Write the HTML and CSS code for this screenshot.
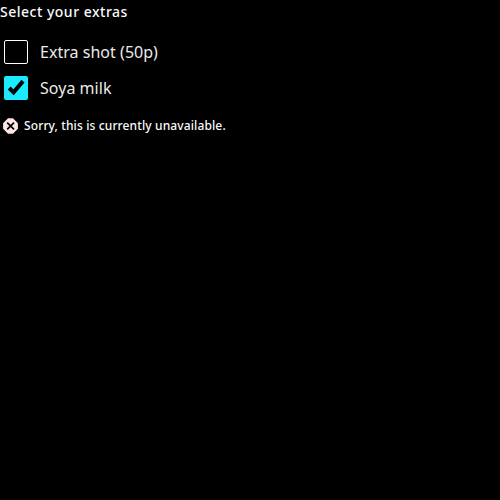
FILE: index.html
```html
<!DOCTYPE html>
<html lang="en">
<head>
<meta charset="utf-8">
<title>Extras</title>
<link rel="stylesheet" href="styles.css">
</head>
<body>
<fieldset class="group">
<legend class="legend">Select your extras</legend>
<label class="option"><span class="box"></span><span>Extra shot (50p)</span></label>
<label class="option"><span class="box box-checked"><svg width="24" height="24" viewBox="0 0 24 24"><path d="M5.2 12L9.6 16.4L19 5.1" fill="none" stroke="#000" stroke-width="4"/></svg></span><span>Soya milk</span></label>
<p class="error"><svg class="error-icon" width="16" height="16" viewBox="0 0 16 16"><path d="M5 .3h5L14.9 5.2v5.6L10 15.7H5L.1 10.8V5.2z" fill="#ffe5e5"/><path d="M4.2 4.6l6.8 6.8M11 4.6l-6.8 6.8" stroke="#000" stroke-width="1.7"/></svg><span>Sorry, this is currently unavailable.</span></p>
</fieldset>
</body>
</html>
```
FILE: styles.css
```css
body { margin: 0; background: #000; color: #fafafa; font-family: "Noto Sans", sans-serif; }
.group { margin: 0; padding: 0; border: 0; min-width: 0; }
.legend { padding: 0; margin-bottom: 10px; font-size: 14px; line-height: 24px; font-weight: 500; letter-spacing: .5px; }
.option { display: flex; align-items: center; height: 36px; padding-left: 4px; gap: 12px; font-size: 16px; line-height: 24px; font-weight: 400; letter-spacing: .03px; color: #ebebeb; }
.box { box-sizing: border-box; width: 24px; height: 24px; border: 1px solid #fff; border-radius: 2px; }
.box-checked { border: 0; background: #1aebff; }
.box svg { display: block; }
.error { display: flex; align-items: center; gap: 5px; margin: 12px 0 0 3px; font-size: 12px; line-height: 16px; font-weight: 500; letter-spacing: .125px; }
```
